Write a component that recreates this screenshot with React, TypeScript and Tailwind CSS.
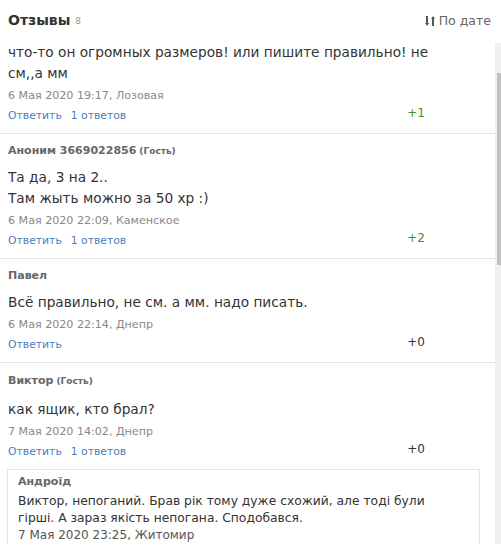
import React from "react";

const F = { fontFamily: '"DejaVu Sans", Verdana, sans-serif' };

function SortIcon() {
  return (
    <svg width="11" height="12" viewBox="0 0 11 12" className="mr-[3px]">
      <path d="M2 1 V9" stroke="#555" strokeWidth="2" />
      <path d="M0 8 L2 11 L4 8 Z" fill="#555" />
      <path d="M8 3 V11" stroke="#555" strokeWidth="2" />
      <path d="M6 4 L8 1 L10 4 Z" fill="#555" />
    </svg>
  );
}

function Links({ replies, score, green }: { replies?: string; score: string; green?: boolean }) {
  return (
    <div className="mt-[4px] flex items-start h-[16px] pr-[62px]">
      <div className="flex-1 text-[10.8px] leading-[16px] text-[#4a80bd]">
        <span>Ответить</span>
        {replies && <span className="ml-[9px]">{replies}</span>}
      </div>
      <div className={"-mt-[3px] text-[12px] leading-[16px] " + (green ? "text-[#3f8f3a]" : "text-[#333]")}>{score}</div>
    </div>
  );
}

function Author({ name, guest }: { name: string; guest?: boolean }) {
  return (
    <div className="h-[16px] text-[11px] leading-[16px] font-bold text-[#666]">
      {name}
      {guest && <span className="text-[9px] ml-[3px]">(Гость)</span>}
    </div>
  );
}

function Meta({ children }: { children: React.ReactNode }) {
  return <div className="mt-[4px] text-[11.1px] leading-[16px] text-[#888]">{children}</div>;
}

export default function App() {
  return (
    <div className="w-[501px] h-[555px] bg-white overflow-hidden" style={F}>
      <div className="h-[544px] flex flex-col overflow-hidden">
        <div className="h-[40px] flex items-center px-[8px] shrink-0">
          <span className="text-[14px] font-bold text-[#333]">Отзывы</span>
          <span className="ml-[5px] mt-[3px] text-[9px] text-[#999]">8</span>
          <div className="flex-1" />
          <div className="flex items-center text-[12.5px] text-[#666] mr-[2px] mt-[2px]">
            <SortIcon />
            По дате
          </div>
        </div>
        <div className="flex-1 flex overflow-hidden">
          <div className="flex-1 min-w-0">
            {/* item 1 */}
            <div className="px-[8px] pt-[2px] pb-[9px] border-b border-[#e3e3e3]">
              <div className="text-[13.7px] leading-[21px] text-[#333]">
                что-то он огромных размеров! или пишите правильно! не
                <br />
                см,,а мм
              </div>
              <Meta>6 Мая 2020 19:17, Лозовая</Meta>
              <Links replies="1 ответов" score="+1" green />
            </div>
            {/* item 2 */}
            <div className="px-[8px] pt-[9px] pb-[9px] border-b border-[#e3e3e3]">
              <Author name="Аноним 3669022856" guest />
              <div className="mt-[8px] text-[13.7px] leading-[21px] text-[#333]">
                Та да, 3 на 2..
                <br />
                Там жыть можно за 50 хр :)
              </div>
              <Meta>6 Мая 2020 22:09, Каменское</Meta>
              <Links replies="1 ответов" score="+2" green />
            </div>
            {/* item 3 */}
            <div className="px-[8px] pt-[9px] pb-[9px] border-b border-[#e3e3e3]">
              <Author name="Павел" />
              <div className="mt-[8px] text-[13.7px] leading-[21px] text-[#333]">
                Всё правильно, не см. а мм. надо писать.
              </div>
              <Meta>6 Мая 2020 22:14, Днепр</Meta>
              <Links score="+0" />
            </div>
            {/* item 4 */}
            <div className="px-[8px] pt-[10px]">
              <Author name="Виктор" guest />
              <div className="mt-[10px] text-[13.7px] leading-[21px] text-[#333]">как ящик, кто брал?</div>
              <Meta>7 Мая 2020 14:02, Днепр</Meta>
              <Links replies="1 ответов" score="+0" />
              <div className="mt-[9px] ml-[-1px] mr-[7px] border border-[#e3e3e3] pl-[10px] pt-[4px] pb-[20px]">
                <Author name="Андроїд" />
                <div className="mt-[3px] text-[12.3px] leading-[17px] text-[#333]">
                  Виктор, непоганий. Брав рік тому дуже схожий, але тоді були
                  <br />
                  гірші. А зараз якість непогана. Сподобався.
                </div>
                <div className="text-[12px] leading-[16px] text-[#555]">7 Мая 2020 23:25, Житомир</div>
              </div>
            </div>
          </div>
          <div className="w-[6px] shrink-0 bg-[#f0f0f0] mt-[3px] flex flex-col">
            <div className="h-[30px]" />
            <div className="h-[192px] ml-[2px] bg-[#c1c1c1]" />
          </div>
        </div>
      </div>
    </div>
  );
}
